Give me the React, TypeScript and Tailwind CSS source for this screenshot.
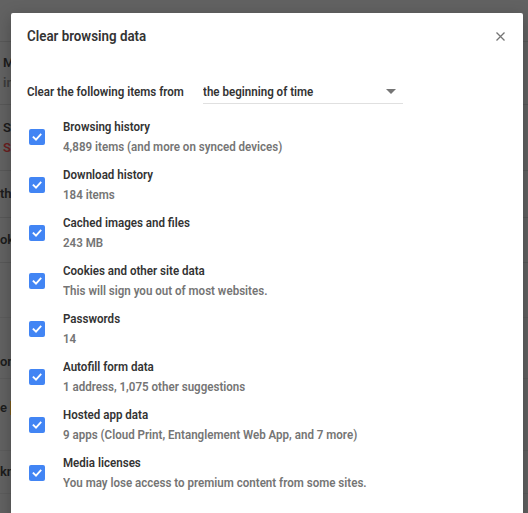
import React from "react";

const items = [
  { title: "Browsing history", sub: "4,889 items (and more on synced devices)" },
  { title: "Download history", sub: "184 items" },
  { title: "Cached images and files", sub: "243 MB" },
  { title: "Cookies and other site data", sub: "This will sign you out of most websites." },
  { title: "Passwords", sub: "14" },
  { title: "Autofill form data", sub: "1 address, 1,075 other suggestions" },
  { title: "Hosted app data", sub: "9 apps (Cloud Print, Entanglement Web App, and 7 more)" },
  { title: "Media licenses", sub: "You may lose access to premium content from some sites." },
];

function Check() {
  return (
    <div className="flex h-[16px] w-[16px] shrink-0 items-center justify-center rounded-[2px] bg-[#4285f4]">
      <svg width="12" height="12" viewBox="0 0 12 12" fill="none">
        <path d="M2.5 6.2 L5 8.6 L9.6 3.6" stroke="#fff" strokeWidth="1.8" strokeLinecap="square" />
      </svg>
    </div>
  );
}

// Roboto squeezed horizontally to the condensed width used by the dialog text
function Narrow({ children, className = "" }: { children: React.ReactNode; className?: string }) {
  return (
    <span className={`inline-block origin-left scale-x-[0.89] whitespace-nowrap ${className}`}>{children}</span>
  );
}

export default function App() {
  return (
    <div
      className="relative h-[513px] w-[528px] overflow-hidden bg-[#626262]"
      style={{ fontFamily: "Roboto, 'Noto Sans', sans-serif" }}
    >
      {/* dimmed settings page behind the dialog */}
      <div className="flex flex-col text-[13px] font-semibold leading-[20px]">
        <div className="h-[42px] border-b border-[#585858]" />
        <div className="flex h-[63px] flex-col justify-center border-b border-[#585858] pl-[3px]">
          <span className="text-[#1c1c1c]">Manage</span>
          <span className="text-[#3c3c3c]">info</span>
        </div>
        <div className="flex h-[66px] flex-col justify-center border-b border-[#585858] pl-[3px]">
          <span className="text-[#1c1c1c]">Sync</span>
          <span className="text-[#6b2020]">Sign in</span>
        </div>
        <div className="flex h-[47px] items-center border-b border-[#585858]">
          <span className="text-[#1c1c1c]">theme</span>
        </div>
        <div className="flex h-[45px] items-center border-b border-[#585858]">
          <span className="text-[#1c1c1c]">okay</span>
        </div>
        <div className="h-[55px] border-b border-[#5c5c5c]" />
        <div className="flex h-[61px] items-end border-b border-[#5c5c5c] pb-[6px]">
          <span className="text-[#1c1c1c]">omnibox</span>
        </div>
        <div className="flex h-[72px] items-start border-b border-[#5c5c5c] pt-[19px]">
          <span className="text-[#1c1c1c]">e</span>
          <span className="ml-[3px] mt-[3px] h-[14px] w-[3px] bg-[#7a5a1c]" />
        </div>
        <div className="flex h-[43px] items-center border-b border-[#5c5c5c]">
          <span className="text-[#1c1c1c]">known</span>
        </div>
      </div>

      {/* dialog */}
      <div className="absolute left-[11px] top-[13px] h-[520px] w-[512px] rounded-[2px] bg-white shadow-[0_4px_16px_rgba(0,0,0,0.25)]">
        <div className="flex h-[46px] items-center justify-between pl-[16px] pr-[18px]">
          <Narrow className="text-[15px] font-semibold leading-[20px] text-[#333]">Clear browsing data</Narrow>
          <svg width="9" height="9" viewBox="0 0 9 9">
            <path d="M0.5 0.5 L8.5 8.5 M8.5 0.5 L0.5 8.5" stroke="#757575" strokeWidth="1.3" />
          </svg>
        </div>

        <div className="mt-[21px] grid h-[24px] grid-cols-[176px_200px] items-center pl-[16px] text-[13px] font-semibold leading-[20px]">
          <Narrow className="text-[#333]">Clear the following items from</Narrow>
          <div className="flex h-[24px] items-center justify-between border-b border-[#e0e0e0]">
            <Narrow className="text-[#333]">the beginning of time</Narrow>
            <svg width="10" height="5" viewBox="0 0 10 5" className="mr-[7px]">
              <path d="M0 0 L10 0 L5 5 Z" fill="#757575" />
            </svg>
          </div>
        </div>

        <div className="mt-[9px] flex flex-col pl-[18px]">
          {items.map((it) => (
            <div key={it.title} className="flex h-[48px] items-center gap-[18px]">
              <Check />
              <div className="flex flex-col text-[13px] font-semibold leading-[20px]">
                <Narrow className="text-[#333]">{it.title}</Narrow>
                <Narrow className="text-[#757575]">{it.sub}</Narrow>
              </div>
            </div>
          ))}
        </div>
      </div>
    </div>
  );
}
